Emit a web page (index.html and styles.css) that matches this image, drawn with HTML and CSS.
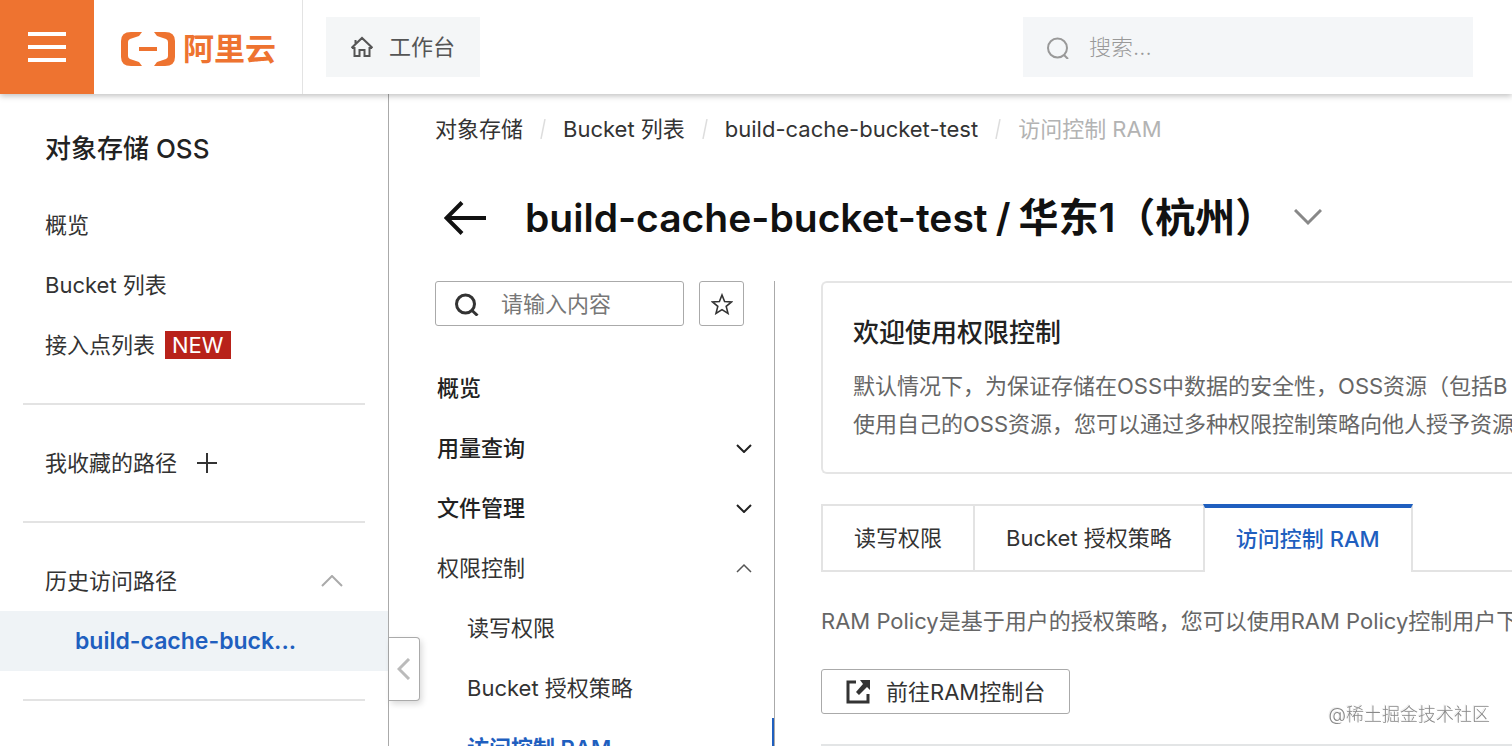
FILE: index.html
```html
<!DOCTYPE html>
<html lang="zh-CN">
<head>
    <meta charset="UTF-8">
    <title>对象存储 OSS</title>
    <link rel="stylesheet" href="styles.css">
</head>
<body>
<header class="header">
    <button class="menu" type="button" aria-label="菜单">
        <svg width="38" height="30" viewBox="0 0 38 30"><path d="M0 2h38M0 15h38M0 28h38" stroke="#fff" stroke-width="4"/></svg>
    </button>
    <a class="logo" href="#">
        <svg width="54" height="36" viewBox="0 0 54 36" fill="#ee7330">
            <path d="M21 1H10Q0 1 0 10V26Q0 35 10 35H21L18 31L9 28Q7 27 7 25V11Q7 9 9 8L18 5Z"/>
            <path d="M33 1H44Q54 1 54 10V26Q54 35 44 35H33L36 31L45 28Q47 27 47 25V11Q47 9 45 8L36 5Z"/>
            <path d="M18 16h18v4H18z"/>
        </svg>
        <span>阿里云</span>
    </a>
    <a class="work" href="#">
        <svg width="22" height="22" viewBox="0 0 22 22" fill="none" stroke="#555" stroke-width="2"><path d="M0.500 12L11 2l10.500 10M4.500 8.500V4M1 12h2.500v8h5v-6h5v6h5v-8H21"/></svg>
        <span>工作台</span>
    </a>
    <label class="search">
        <svg width="24" height="24" viewBox="0 0 24 24" fill="none" stroke="#999" stroke-width="2"><circle cx="10.500" cy="13" r="9.500"/><path d="M17 20l4 4"/></svg>
        <input type="text" placeholder="搜索..." aria-label="搜索">
    </label>
</header>
<div class="page">
    <aside class="side">
        <h2>对象存储 OSS</h2>
        <a class="item" href="#">概览</a>
        <a class="item" href="#">Bucket 列表</a>
        <a class="item" href="#">接入点列表<span class="new">NEW</span></a>
        <hr>
        <div class="item">我收藏的路径
            <button class="add" type="button" aria-label="添加"><svg width="20" height="20" viewBox="0 0 20 20"><path d="M10 0v20M0 10h20" stroke="#333" stroke-width="2"/></svg></button>
        </div>
        <hr>
        <button class="item fold" type="button">历史访问路径
            <svg width="22" height="12" viewBox="0 0 22 12" fill="none" stroke="#aaa" stroke-width="2"><path d="M1 11L11 1l10 10"/></svg>
        </button>
        <a class="item on" href="#">build-cache-buck...</a>
        <hr>
        <button class="close" type="button" aria-label="收起">
            <svg width="14" height="22" viewBox="0 0 14 22" fill="none" stroke="#bbb" stroke-width="3"><path d="M12 1L2 11l10 10"/></svg>
        </button>
    </aside>
    <main class="main">
        <nav class="crumb">
            <a href="#">对象存储</a>
            <svg width="6" height="20" viewBox="0 0 6 20"><path d="M5 0L1 20" stroke="#ddd" stroke-width="1.500"/></svg>
            <a href="#">Bucket 列表</a>
            <svg width="6" height="20" viewBox="0 0 6 20"><path d="M5 0L1 20" stroke="#ddd" stroke-width="1.500"/></svg>
            <a href="#">build-cache-bucket-test</a>
            <svg width="6" height="20" viewBox="0 0 6 20"><path d="M5 0L1 20" stroke="#ddd" stroke-width="1.500"/></svg>
            <span>访问控制 RAM</span>
        </nav>
        <div class="title">
            <button type="button" aria-label="返回">
                <svg width="42" height="34" viewBox="0 0 42 34" fill="none" stroke="#111" stroke-width="4"><path d="M42 17H3M18 1.500L2.500 17L18 32.500"/></svg>
            </button>
            <h1><span>build-cache-bucket-test</span><span>/</span><span class="area">华东1（杭州）</span></h1>
            <button type="button" aria-label="切换">
                <svg width="28" height="18" viewBox="0 0 28 18" fill="none" stroke="#888" stroke-width="3"><path d="M1 1l13 13L27 1"/></svg>
            </button>
        </div>
        <div class="body">
            <nav class="nav">
                <div class="tool">
                    <label class="find">
                        <svg width="24" height="24" viewBox="0 0 24 24" fill="none" stroke="#333" stroke-width="3"><circle cx="10.500" cy="12" r="9"/><path d="M17 18.500l5.500 5"/></svg>
                        <input type="text" placeholder="请输入内容" aria-label="请输入内容">
                    </label>
                    <button class="star" type="button" aria-label="收藏">
                        <svg width="22" height="22" viewBox="0 0 22 22" fill="none" stroke="#333" stroke-width="1.600"><path d="M11 2l2.600 6.500 7 .4-5.400 4.500 1.800 7L11 16.600l-6 3.800 1.800-7L1.400 8.900l7-.4z"/></svg>
                    </button>
                </div>
                <a class="row bold" href="#">概览</a>
                <a class="row bold" href="#">用量查询
                    <svg width="16" height="10" viewBox="0 0 16 10" fill="none" stroke="#222" stroke-width="2"><path d="M1 2l7 7 7-7"/></svg>
                </a>
                <a class="row bold" href="#">文件管理
                    <svg width="16" height="10" viewBox="0 0 16 10" fill="none" stroke="#222" stroke-width="2"><path d="M1 2l7 7 7-7"/></svg>
                </a>
                <a class="row" href="#">权限控制
                    <svg width="16" height="10" viewBox="0 0 16 10" fill="none" stroke="#555" stroke-width="1.500"><path d="M1 9l7-7 7 7"/></svg>
                </a>
                <a class="row sub" href="#">读写权限</a>
                <a class="row sub" href="#">Bucket 授权策略</a>
                <a class="row sub now" href="#">访问控制 RAM</a>
            </nav>
            <section class="content">
                <div class="card">
                    <h3>欢迎使用权限控制</h3>
                    <p>默认情况下，为保证存储在OSS中数据的安全性，OSS资源（包括B</p>
                    <p>使用自己的OSS资源，您可以通过多种权限控制策略向他人授予资源</p>
                </div>
                <div class="tabs">
                    <button type="button">读写权限</button>
                    <button type="button">Bucket 授权策略</button>
                    <button class="cur" type="button">访问控制 RAM</button>
                    <i></i>
                </div>
                <p class="tip">RAM Policy是基于用户的授权策略，您可以使用RAM Policy控制用户下</p>
                <button class="go" type="button">
                    <svg width="24" height="24" viewBox="0 0 24 24"><path d="M10 2H2v20h20v-8" fill="none" stroke="#333" stroke-width="3"/><path d="M14 0h10v10l-3-3-8 8-3-3 7-8z" fill="#333"/></svg>
                    前往RAM控制台
                </button>
                <div class="table"></div>
            </section>
        </div>
    </main>
</div>
<div class="mark">@稀土掘金技术社区</div>
</body>
</html>
```
FILE: styles.css
```css
*{
    padding: 0;
    margin: 0;
    box-sizing: border-box;
}
body{
    height: 100vh;
    display: flex;
    flex-direction: column;
    overflow: hidden;
    background: #fff;
    color: #333;
    font: 22px/30px Inter,"Noto Sans CJK SC",sans-serif;
}
a{
    color: inherit;
    text-decoration: none;
}
button,input{
    font: inherit;
    color: inherit;
    border: 0;
    background: none;
    outline: none;
}
svg{
    display: block;
    flex: none;
}
.header{
    height: 94px;
    flex: none;
    display: flex;
    align-items: center;
    position: relative;
    z-index: 2;
    background: #fff;
    box-shadow: 0 2px 6px rgba(0,0,0,.25);
}
.menu{
    width: 94px;
    height: 94px;
    display: flex;
    align-items: center;
    justify-content: center;
    background: #ee7330;
}
.logo{
    width: 209px;
    height: 94px;
    padding: 4px 0 0 27px;
    display: flex;
    align-items: center;
    gap: 8px;
    border-right: 1px solid #e3e3e3;
    color: #ee7330;
    font-size: 31px;
    font-weight: 700;
}
.work{
    width: 154px;
    height: 60px;
    margin-left: 23px;
    display: flex;
    align-items: center;
    justify-content: center;
    gap: 16px;
    background: #f4f6f7;
    color: #555;
}
.search{
    width: 450px;
    height: 60px;
    margin: 0 39px 0 auto;
    padding-left: 24px;
    display: flex;
    align-items: center;
    gap: 18px;
    background: #f4f6f8;
}
.search input,.find input{
    flex: 1;
    min-width: 0;
}
.search input::placeholder{
    color: #999;
    font-weight: 300;
}
.page{
    flex: 1;
    min-height: 0;
    display: flex;
}
.side{
    width: 389px;
    flex: none;
    position: relative;
    border-right: 1px solid #aaa;
}
.side h2{
    height: 101px;
    padding: 40px 45px 0;
    font-size: 26px;
    font-weight: 500;
    color: #222;
}
.item{
    width: 100%;
    height: 60px;
    padding: 0 45px;
    display: flex;
    align-items: center;
}
.new{
    margin-left: 10px;
    padding: 0 7px;
    line-height: 28px;
    background: #b8221a;
    color: #fff;
}
.side hr{
    margin: 28px 23px;
    border: 0;
    border-top: 2px solid #e3e3e3;
}
.add{
    margin-left: 20px;
}
.fold{
    justify-content: space-between;
}
.side .on{
    padding-left: 75px;
    background: #eff3f6;
    color: #1f5fbf;
    font-size: 23px;
    font-weight: 600;
}
.close{
    width: 31px;
    height: 64px;
    position: absolute;
    right: -32px;
    top: 543px;
    display: flex;
    align-items: center;
    justify-content: center;
    border: 1px solid #aaa;
    border-left: 0;
    border-radius: 0 4px 4px 0;
    background: #fff;
    box-shadow: 2px 3px 6px rgba(0,0,0,.15);
}
.main{
    flex: 1;
    min-width: 0;
    padding-left: 46px;
    overflow: hidden;
    white-space: nowrap;
}
.crumb{
    height: 70px;
    display: flex;
    align-items: center;
    gap: 17px;
}
.crumb span{
    color: #b3b3b3;
}
.title{
    height: 108px;
    padding-left: 9px;
    display: flex;
    align-items: center;
}
.title h1{
    margin: 0 19px 0 39px;
    display: flex;
    align-items: baseline;
    gap: 8px;
    font-size: 39px;
    line-height: 60px;
    font-weight: 600;
    color: #111;
}
.title .area{
    font-size: 40px;
}
.body{
    margin-top: 9px;
    display: flex;
}
.nav{
    width: 340px;
    flex: none;
    border-right: 1px solid #aaa;
}
.tool{
    margin-bottom: 32px;
    display: flex;
    gap: 15px;
}
.find{
    width: 249px;
    height: 45px;
    padding-left: 19px;
    display: flex;
    align-items: center;
    gap: 22px;
    border: 1px solid #aaa;
    border-radius: 3px;
}
.find input::placeholder{
    color: #777;
}
.star{
    width: 45px;
    height: 45px;
    display: flex;
    align-items: center;
    justify-content: center;
    border: 1px solid #aaa;
    border-radius: 3px;
}
.row{
    height: 60px;
    padding: 0 22px 0 2px;
    display: flex;
    align-items: center;
    justify-content: space-between;
}
.bold{
    font-weight: 500;
    color: #222;
}
.sub{
    padding-left: 32px;
}
.now{
    border-right: 2px solid #1f5fbf;
    color: #1f5fbf;
    font-weight: 600;
}
.content{
    flex: 1;
    min-width: 0;
    padding-left: 46px;
}
.card{
    height: 193px;
    padding: 35px 30px 0;
    border: 2px solid #e5e5e5;
    border-right: 0;
    border-radius: 6px 0 0 6px;
}
.card h3{
    margin-bottom: 19px;
    font-size: 26px;
    font-weight: 500;
    color: #222;
}
.card p{
    line-height: 38px;
    color: #666;
}
.tabs{
    height: 68px;
    margin: 30px 0 34px;
    display: flex;
}
.tabs button{
    padding: 0 31px;
    border: 2px solid #e3e3e3;
    border-right: 0;
}
.tabs .cur{
    padding-bottom: 2px;
    border-top: 4px solid #1f5fbf;
    border-right: 2px solid #e3e3e3;
    border-bottom: 0;
    color: #1f5fbf;
    font-weight: 500;
}
.tabs i{
    flex: 1;
    border-bottom: 2px solid #e3e3e3;
}
.tip{
    color: #666;
}
.go{
    height: 45px;
    margin: 33px 0 30px;
    padding: 0 24px;
    display: flex;
    align-items: center;
    gap: 16px;
    border: 1px solid #aaa;
    border-radius: 3px;
}
.table{
    height: 60px;
    border-top: 4px solid #e3e5e6;
}
.mark{
    position: fixed;
    right: 22px;
    bottom: 16px;
    z-index: 3;
    font-size: 18px;
    font-weight: 300;
    line-height: 30px;
    color: #888;
    text-shadow: -1px -1px 0 #eee;
}
```
